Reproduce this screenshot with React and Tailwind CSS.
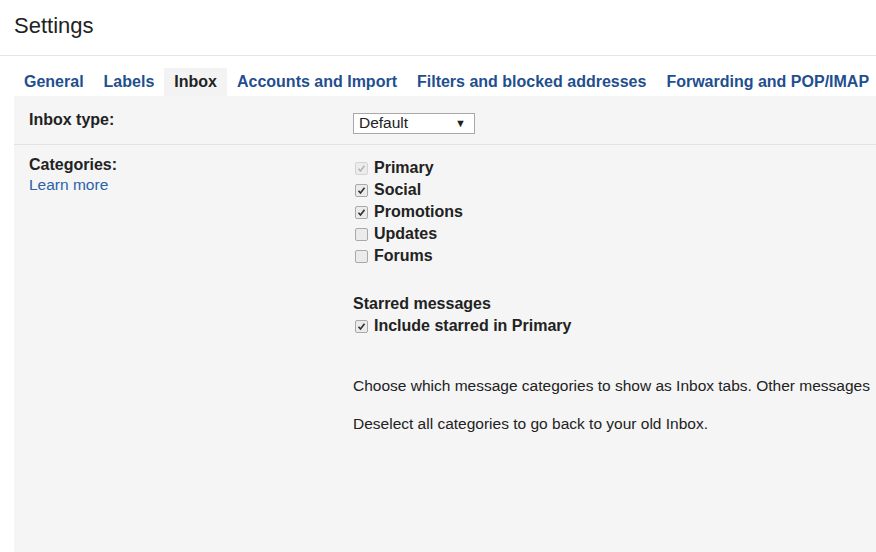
export default function App() {
  const tabs = ['General', 'Labels', 'Inbox', 'Accounts and Import', 'Filters and blocked addresses', 'Forwarding and POP/IMAP']
  const cats = [
    { name: 'Primary', checked: true, disabled: true },
    { name: 'Social', checked: true },
    { name: 'Promotions', checked: true },
    { name: 'Updates', checked: false },
    { name: 'Forums', checked: false },
  ]

  const Box = ({ checked, disabled }) => (
    <span className={"inline-flex items-center justify-center w-[13px] h-[13px] border rounded-[2px] " + (disabled ? "border-[#d4d4d4] bg-[#ececec]" : "border-[#a9a9a9] bg-[#ebebeb]")}>
      {checked &&
        <svg width="9" height="9" viewBox="0 0 9 9">
          <path d="M1.5 4.8 L3.5 7 L7.5 1.8" fill="none" stroke={disabled ? '#b5b5b5' : '#333'} strokeWidth="1.7" />
        </svg>
      }
    </span>
  )

  return (
    <div className="w-[876px] h-[552px] overflow-hidden bg-white font-['Liberation_Sans',Arial,sans-serif] flex flex-col">
      <div className="h-[56px] border-b border-[#e5e5e5] pl-[14px] pt-[11px]">
        <h1 className="text-[22px] text-[#222] leading-[30px]">Settings</h1>
      </div>
      <div className="flex pl-[14px] pt-[12px] whitespace-nowrap">
        {tabs.map((t) => (
          <div
            key={t}
            className={"px-[10px] h-[28px] leading-[28px] text-[16px] font-bold " + (t === 'Inbox' ? "bg-[#f3f3f3] text-[#222]" : "text-[#1f4f8f]")}
          >{t}</div>
        ))}
      </div>
      <div className="ml-[14px] flex-1 bg-[#f5f5f5]">
        <div className="flex h-[49px] border-b border-[#e3e3e3] items-center">
          <div className="w-[339px] shrink-0 pl-[15px] text-[16px] font-bold text-[#222]">Inbox type:</div>
          <div className="w-[122px] h-[21px] border border-[#a8a8a8] bg-white flex items-center justify-between pl-[5px] pr-[8px] text-[15.5px] text-[#222] mt-[6px]">
            <span>Default</span>
            <span className="text-[11px]">▼</span>
          </div>
        </div>
        <div className="flex pt-[10px]">
          <div className="w-[339px] shrink-0 pl-[15px]">
            <div className="text-[16px] font-bold text-[#222] leading-[20px]">Categories:</div>
            <div className="text-[15.5px] text-[#2a62a8] leading-[20px]">Learn more</div>
          </div>
          <div className="flex flex-col min-w-0 pt-[2px]">
            {cats.map((c) => (
              <div key={c.name} className="flex items-center h-[22px] gap-[6px] pl-[2px]">
                <Box checked={c.checked} disabled={c.disabled} />
                <span className="text-[16px] font-bold text-[#222]">{c.name}</span>
              </div>
            ))}
            <div className="mt-[27px] text-[16px] font-bold text-[#222] leading-[20px]">Starred messages</div>
            <div className="flex items-center h-[24px] gap-[6px] pl-[2px]">
              <Box checked />
              <span className="text-[16px] font-bold text-[#222]">Include starred in Primary</span>
            </div>
            <div className="mt-[38px] text-[15.5px] text-[#222] leading-[20px] whitespace-nowrap">Choose which message categories to show as Inbox tabs. Other messages</div>
            <div className="mt-[18px] text-[15.5px] text-[#222] leading-[20px]">Deselect all categories to go back to your old Inbox.</div>
          </div>
        </div>
      </div>
    </div>
  )
}
